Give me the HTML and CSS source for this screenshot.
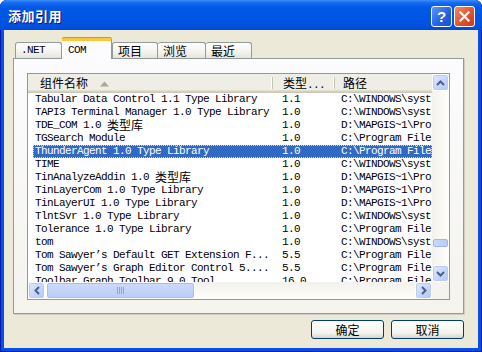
FILE: index.html
```html
<!DOCTYPE html>
<html lang="zh-CN">

<head>
    <meta charset="UTF-8">
    <link rel="stylesheet" href="styles.css">
    <title>添加引用</title>
</head>

<body>
    <div class="window">
        <div class="titlebar">
            <span class="title">添加引用</span>
            <div class="caption">
                <span class="cbtn help">?</span>
                <span class="cbtn close">
                    <svg width="11" height="11" viewBox="0 0 11 11"><path d="M1.5 1.5 L9.5 9.5 M9.5 1.5 L1.5 9.5" stroke="#fff" stroke-width="2.2" stroke-linecap="square"/></svg>
                </span>
            </div>
        </div>
        <div class="client">
            <div class="tabs">
                <span class="tab t-net mono">.NET</span>
                <span class="tab t-com active mono">COM</span>
                <span class="tab t-proj">项目</span>
                <span class="tab t-browse">浏览</span>
                <span class="tab t-recent">最近</span>
            </div>
            <div class="panel">
                <div class="list">
                    <div class="list-main">
                        <div class="view">
                            <div class="head">
                                <div class="hcol c-name">组件名称
                                    <svg class="sort" width="9" height="6" viewBox="0 0 9 6"><path d="M0 5.5 L4.5 0.5 L9 5.5 Z" fill="#ACA899"/></svg>
                                </div>
                                <div class="hcol c-type">类型<span class="mono">...</span></div>
                                <div class="hcol c-path">路径</div>
                            </div>
                            <div class="rows">
                                <div class="row"><span class="name">Tabular Data Control 1.1 Type Library</span><span class="type">1.1</span><span class="path">C:\WINDOWS\syst</span></div>
                                <div class="row"><span class="name">TAPI3 Terminal Manager 1.0 Type Library</span><span class="type">1.0</span><span class="path">C:\WINDOWS\syst</span></div>
                                <div class="row"><span class="name">TDE_COM 1.0 <span class="cjk">类型库</span></span><span class="type">1.0</span><span class="path">D:\MAPGIS~1\Pro</span></div>
                                <div class="row"><span class="name">TGSearch Module</span><span class="type">1.0</span><span class="path">C:\Program File</span></div>
                                <div class="row selected"><span class="name">ThunderAgent 1.0 Type Library</span><span class="type">1.0</span><span class="path">C:\Program File</span></div>
                                <div class="row"><span class="name">TIME</span><span class="type">1.0</span><span class="path">C:\WINDOWS\syst</span></div>
                                <div class="row"><span class="name">TinAnalyzeAddin 1.0 <span class="cjk">类型库</span></span><span class="type">1.0</span><span class="path">D:\MAPGIS~1\Pro</span></div>
                                <div class="row"><span class="name">TinLayerCom 1.0 Type Library</span><span class="type">1.0</span><span class="path">D:\MAPGIS~1\Pro</span></div>
                                <div class="row"><span class="name">TinLayerUI 1.0 Type Library</span><span class="type">1.0</span><span class="path">D:\MAPGIS~1\Pro</span></div>
                                <div class="row"><span class="name">TlntSvr 1.0 Type Library</span><span class="type">1.0</span><span class="path">C:\WINDOWS\syst</span></div>
                                <div class="row"><span class="name">Tolerance 1.0 Type Library</span><span class="type">1.0</span><span class="path">C:\Program File</span></div>
                                <div class="row"><span class="name">tom</span><span class="type">1.0</span><span class="path">C:\WINDOWS\syst</span></div>
                                <div class="row"><span class="name">Tom Sawyer’s Default GET Extension F...</span><span class="type">5.5</span><span class="path">C:\Program File</span></div>
                                <div class="row"><span class="name">Tom Sawyer’s Graph Editor Control 5....</span><span class="type">5.5</span><span class="path">C:\Program File</span></div>
                                <div class="row"><span class="name">Toolbar Graph Toolbar 9.0 Tool...</span><span class="type">16.0</span><span class="path">C:\Program File</span></div>
                            </div>
                        </div>
                        <div class="vscroll">
                            <span class="sbtn">
                                <svg width="9" height="6" viewBox="0 0 9 6"><path d="M1 5 L4.5 1.5 L8 5" fill="none" stroke="#4D6185" stroke-width="2"/></svg>
                            </span>
                            <div class="vtrack"><span class="vthumb"></span></div>
                            <span class="sbtn">
                                <svg width="9" height="6" viewBox="0 0 9 6"><path d="M1 1 L4.5 4.5 L8 1" fill="none" stroke="#4D6185" stroke-width="2"/></svg>
                            </span>
                        </div>
                    </div>
                    <div class="hbar">
                        <div class="hscroll">
                            <span class="sbtn">
                                <svg width="6" height="9" viewBox="0 0 6 9"><path d="M5 1 L1.5 4.5 L5 8" fill="none" stroke="#4D6185" stroke-width="2"/></svg>
                            </span>
                            <div class="htrack">
                                <span class="hthumb">
                                    <svg width="8" height="7" viewBox="0 0 8 7"><path d="M0.5 0 V7 M2.5 0 V7 M4.5 0 V7 M6.5 0 V7" stroke="#8CA4E0" stroke-width="1"/></svg>
                                </span>
                            </div>
                            <span class="sbtn">
                                <svg width="6" height="9" viewBox="0 0 6 9"><path d="M1 1 L4.5 4.5 L1 8" fill="none" stroke="#4D6185" stroke-width="2"/></svg>
                            </span>
                        </div>
                        <div class="corner"></div>
                    </div>
                </div>
            </div>
            <div class="buttons">
                <button class="btn">确定</button>
                <button class="btn">取消</button>
            </div>
        </div>
    </div>
</body>

</html>
```

FILE: styles.css
```css
body {
    margin: 0;
    background: #fff;
    font-family: "Noto Sans CJK SC", "Liberation Sans", sans-serif;
    font-size: 12px;
}

.mono {
    font-family: "Liberation Mono", "Noto Sans CJK SC", monospace;
    font-size: 11px;
    letter-spacing: -0.6px;
}

.window {
    width: 482px;
    height: 352px;
    display: flex;
    flex-direction: column;
    background: #0A4FE2;
    border-radius: 7px 7px 0 0;
    box-shadow: inset 1px 0 #0019B0, inset -1px 0 #0019B0, inset 0 -1px #0019B0;
    overflow: hidden;
}

/* title bar */

.titlebar {
    height: 30px;
    flex: none;
    display: flex;
    align-items: center;
    justify-content: space-between;
    padding: 0 7px 0 8px;
    background: linear-gradient(#3D8EF9 0px, #1568EE 3px, #0058E6 8px, #0055E3 18px, #0051DF 26px, #0049D8 30px);
}

.title {
    color: #fff;
    font-weight: bold;
    font-size: 13px;
    letter-spacing: 0.5px;
    text-shadow: 1px 1px #0A1A80;
}

.caption {
    display: flex;
    gap: 2px;
    margin-top: 2px;
}

.cbtn {
    width: 21px;
    height: 21px;
    box-sizing: border-box;
    border: 1px solid #fff;
    border-radius: 3px;
    display: flex;
    align-items: center;
    justify-content: center;
}

.help {
    background: linear-gradient(135deg, #5C95F6, #2260E0 60%, #1A52D3);
    color: #fff;
    font: bold 15px "Liberation Sans", sans-serif;
}

.close {
    background: linear-gradient(135deg, #EE8A6A, #E0532E 55%, #C73A18);
}

/* client area */

.client {
    flex: 1;
    margin: 0 4px 4px;
    background: #ECE9D8;
    padding: 9px 14px 9px 9px;
    display: flex;
    flex-direction: column;
}

.tabs {
    height: 19px;
    display: flex;
    align-items: flex-end;
    padding-left: 2px;
    position: relative;
    z-index: 1;
}

.tab {
    box-sizing: border-box;
    height: 16px;
    padding: 0 0 0 5px;
    line-height: 15px;
    border: 1px solid #919B9C;
    border-bottom: none;
    border-radius: 3px 3px 0 0;
    background: linear-gradient(#FFFFFF, #F3F2EE 60%, #E6E4DA);
}

.tab + .tab {
    border-left: none;
}

.t-net { width: 47px; }
.t-proj { width: 46px; border-left: 1px solid #919B9C !important; }
.t-browse { width: 48px; }
.t-recent { width: 46px; }

.tab.active {
    width: 50px;
    height: 21px;
    margin-bottom: -1px;
    padding-left: 6px;
    line-height: 18px;
    border-top: 3px solid #FFC83C;
    box-shadow: 0 -1px #E68B2C;
    background: #FCFCFE;
    border-radius: 2px 2px 0 0;
}

.panel {
    width: 451px;
    height: 256px;
    box-sizing: border-box;
    border: 1px solid #919B9C;
    box-shadow: 1px 1px #D0CEBF;
    background: linear-gradient(#FCFCFE, #F4F3EE);
    padding: 14px 13px 13px;
}

/* list view */

.list {
    width: 423px;
    height: 227px;
    box-sizing: border-box;
    border: 1px solid #7F9DB9;
    background: #fff;
    display: flex;
    flex-direction: column;
}

.list-main {
    flex: 1;
    display: flex;
    min-height: 0;
}

.view {
    width: 404px;
    overflow: hidden;
}

.head {
    height: 19px;
    display: flex;
    background: #EFEEE6;
    box-shadow: inset 0 -1px #CBC7B8, inset 0 -2px #D6D2C2, inset 0 -3px #E2DECD;
    line-height: 17px;
}

.hcol {
    box-sizing: border-box;
    flex: none;
    white-space: nowrap;
    background:
        linear-gradient(#C7C5B2, #C7C5B2) right 3px / 1px 12px no-repeat,
        linear-gradient(#fff, #fff) right 3px / 2px 12px no-repeat;
}

.c-name {
    width: 245px;
    padding-left: 12px;
}

.sort {
    margin-left: 9px;
    vertical-align: 1px;
}

.c-type {
    width: 62px;
    padding-left: 10px;
}

.c-path {
    width: 97px;
    padding-left: 8px;
    background: none;
}

.rows {
    font-family: "Liberation Mono", "Noto Sans CJK SC", monospace;
    font-size: 11px;
    letter-spacing: -0.6px;
    line-height: 13px;
}

.row {
    height: 13px;
    display: flex;
    margin-left: 5px;
    white-space: nowrap;
    color: #000;
}

.row.selected {
    background: #316AC5;
    color: #fff;
    outline: 1px dotted #C8D4EA;
    outline-offset: -1px;
}

.row > span {
    height: 13px;
}

.cjk {
    display: inline-block;
    height: 13px;
    font-family: "Noto Sans CJK SC", sans-serif;
    font-size: 12px;
    letter-spacing: 0;
    line-height: 12px;
    vertical-align: top;
}

.name {
    width: 240px;
    flex: none;
    padding-left: 2px;
    box-sizing: border-box;
}

.type {
    width: 62px;
    flex: none;
    padding-left: 9px;
    box-sizing: border-box;
}

.path {
    flex: none;
    padding-left: 6px;
}

/* scrollbars */

.vscroll {
    width: 17px;
    display: flex;
    flex-direction: column;
    background: linear-gradient(to right, #F3F1EC, #FEFEFB);
}

.sbtn {
    width: 17px;
    height: 17px;
    flex: none;
    box-sizing: border-box;
    border: 1px solid #fff;
    border-radius: 3px;
    background: linear-gradient(135deg, #E1EAFE, #C3D3FD 60%, #B4C8F6);
    box-shadow: inset 0 0 0 1px #B9CCF5;
    display: flex;
    align-items: center;
    justify-content: center;
}

.vtrack {
    flex: 1;
    padding-top: 148px;
}

.vthumb {
    display: block;
    height: 8px;
    margin: 0 1px;
    border-radius: 2px;
    background: linear-gradient(to right, #C9D8FC, #BACCF9);
    border: 1px solid #9EB6EE;
    box-sizing: border-box;
}

.hbar {
    height: 17px;
    display: flex;
}

.hscroll {
    width: 404px;
    display: flex;
    background: linear-gradient(#F3F1EC, #FEFEFB);
}

.htrack {
    flex: 1;
    padding-left: 1px;
}

.hthumb {
    width: 149px;
    height: 17px;
    box-sizing: border-box;
    display: flex;
    align-items: center;
    justify-content: center;
    border: 1px solid #fff;
    border-radius: 3px;
    background: linear-gradient(#CDDAFC, #BACCF9);
    box-shadow: inset 0 0 0 1px #A6BDF2;
}

.corner {
    flex: 1;
    background: #F4F3EE;
}

/* buttons */

.buttons {
    display: flex;
    justify-content: flex-end;
    gap: 7px;
    margin-top: 6px;
}

.btn {
    width: 73px;
    height: 19px;
    padding: 0;
    font-family: "Noto Sans CJK SC", sans-serif;
    font-size: 12px;
    line-height: 17px;
    color: #000;
    border: 1px solid #003C74;
    border-radius: 3px;
    background: linear-gradient(#FFFFFF, #F3F3EF 70%, #D8D4C8);
}
```
